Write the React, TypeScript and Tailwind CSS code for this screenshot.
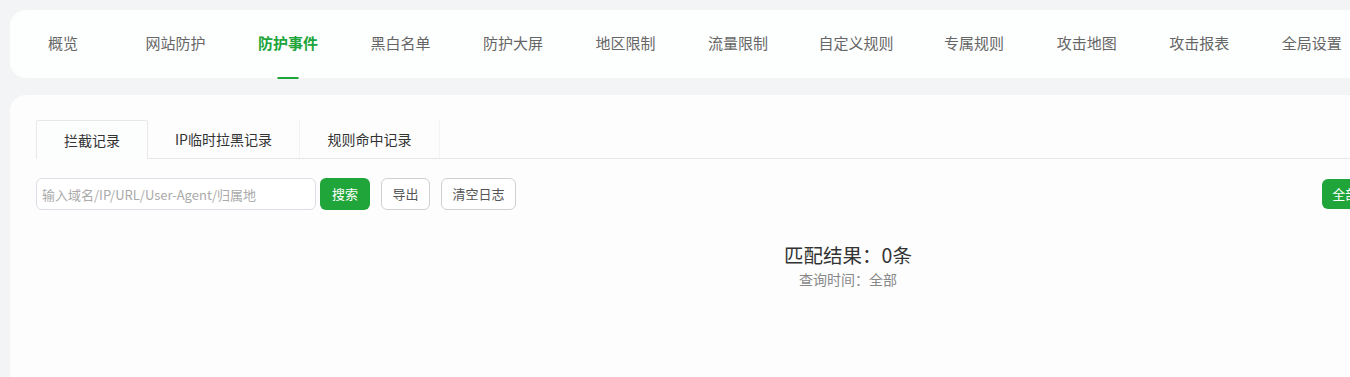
const navItems = [
  '概览',
  '网站防护',
  '防护事件',
  '黑白名单',
  '防护大屏',
  '地区限制',
  '流量限制',
  '自定义规则',
  '专属规则',
  '攻击地图',
  '攻击报表',
  '全局设置',
];

const tabs = ['拦截记录', 'IP临时拉黑记录', '规则命中记录'];
const ranges = ['全部', '今天', '昨天', '近7天', '近30天', '自定义时间'];

const App = () => {
  return (
    <div
      className="w-[1350px] h-[377px] overflow-hidden bg-[#f3f4f5]"
      style={{ fontFamily: '"Microsoft YaHei", "Noto Sans CJK SC", "Liberation Sans", sans-serif' }}
    >
      <div className="w-[1686px] pt-[10px] pl-[10px]">
        {/* Top navigation */}
        <div className="h-[68px] rounded-[16px] bg-[#fdfefe] flex items-center pl-[23px]">
          <div className="flex gap-[52.5px] h-full">
            {navItems.map((item) => {
              const active = item === '防护事件';
              return (
                <div
                  key={item}
                  className={
                    item === '自定义规则'
                      ? 'relative min-w-[60px] h-full flex items-center justify-center mx-[-2px]'
                      : 'relative min-w-[60px] h-full flex items-center justify-center'
                  }
                >
                  <span
                    className={
                      active
                        ? 'text-[15px] font-bold text-[#20a53a] -mt-[1px] whitespace-nowrap'
                        : 'text-[15px] text-[#666] -mt-[1px] whitespace-nowrap'
                    }
                  >
                    {item}
                  </span>
                  {active && (
                    <div className="absolute bottom-[-1px] left-1/2 -translate-x-1/2 w-[21px] h-[2px] bg-[#20a53a]"></div>
                  )}
                </div>
              );
            })}
          </div>
        </div>

        {/* Main panel */}
        <div className="mt-[17px] h-[300px] rounded-[16px] bg-[#fdfdfe] px-[26px] pt-[25px]">
          {/* Tabs */}
          <div className="flex h-[39px] border-b border-[#e6e6e6]">
            {tabs.map((tab, i) => (
              <div
                key={tab}
                className={
                  i === 0
                    ? 'w-[112px] h-[39px] flex items-center justify-center border border-b-0 border-[#e8e8e8] bg-[#fcfdfd] rounded-t-[2px] text-[14px] text-[#333]'
                    : i === 1
                      ? 'w-[152px] h-[38px] flex items-center justify-center border-r border-[#f3f3f3] text-[14px] text-[#333]'
                      : 'w-[140px] h-[38px] flex items-center justify-center border-r border-[#f3f3f3] text-[14px] text-[#333]'
                }
              >
                {tab}
              </div>
            ))}
          </div>

          {/* Toolbar */}
          <div className="flex items-center mt-[19px]">
            <input
              className="w-[280px] h-[32px] rounded-[6px] border border-[#dcdfe6] bg-white px-[5px] text-[13px] text-[#333] placeholder:text-[#aaa] outline-none"
              placeholder="输入域名/IP/URL/User-Agent/归属地"
            />
            <button className="ml-[4px] w-[50px] h-[32px] rounded-[6px] bg-[#20a53a] text-white text-[13px]">
              搜索
            </button>
            <button className="ml-[11px] w-[49px] h-[32px] rounded-[6px] border border-[#d0d0d0] bg-white text-[#555] text-[13px]">
              导出
            </button>
            <button className="ml-[11px] w-[75px] h-[32px] rounded-[6px] border border-[#d0d0d0] bg-white text-[#555] text-[13px]">
              清空日志
            </button>
            <div className="ml-auto flex">
              {ranges.map((r, i) => (
                <button
                  key={r}
                  className={
                    i === 0
                      ? 'h-[30px] px-[10px] rounded-l-[6px] bg-[#20a53a] text-white text-[13px]'
                      : i === ranges.length - 1
                        ? 'h-[30px] px-[8px] rounded-r-[6px] border border-l-0 border-[#d0d0d0] bg-white text-[#555] text-[13px]'
                        : 'h-[30px] px-[10px] border border-l-0 border-[#d0d0d0] bg-white text-[#555] text-[13px]'
                  }
                >
                  {r}
                </button>
              ))}
            </div>
          </div>

          {/* Result summary */}
          <div className="flex flex-col items-center mt-[31px]">
            <div className="text-[19.5px] leading-[28px] text-[#333]">匹配结果：0条</div>
            <div className="text-[14px] leading-[20px] text-[#888]">查询时间：全部</div>
          </div>
        </div>
      </div>
    </div>
  );
};

export default App;
